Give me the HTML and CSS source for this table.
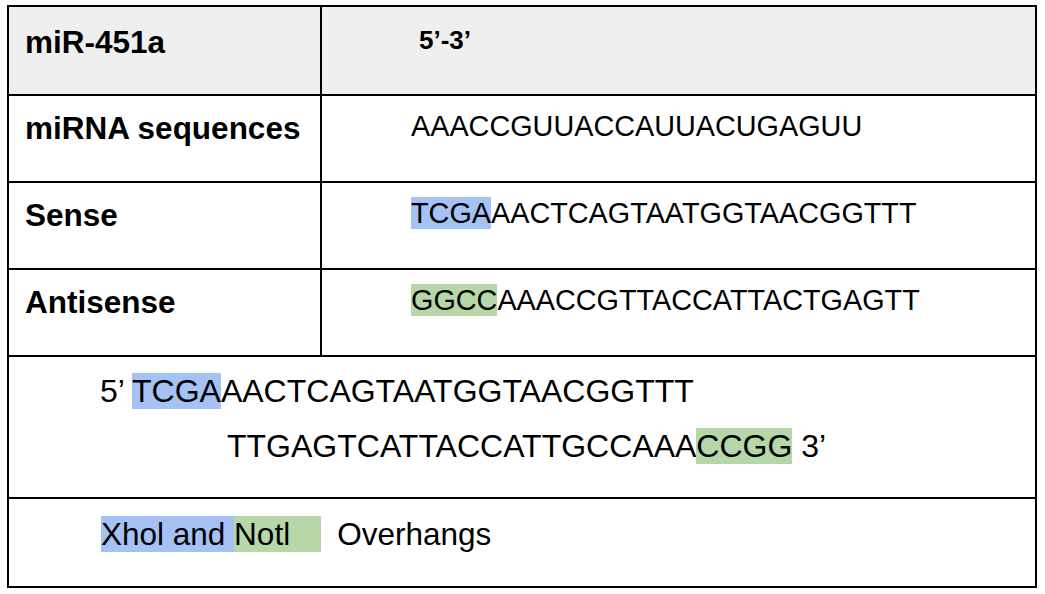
FILE: index.html
```html
<!DOCTYPE html>
<html>
<head>
<meta charset="utf-8">
<link rel="stylesheet" href="styles.css">
</head>
<body>
<table class="grid">
  <tr class="row head">
    <td class="label head-label">miR-451a</td>
    <td class="seq head-seq">5’-3’</td>
  </tr>
  <tr class="row">
    <td class="label">miRNA sequences</td>
    <td class="seq">AAACCGUUACCAUUACUGAGUU</td>
  </tr>
  <tr class="row">
    <td class="label">Sense</td>
    <td class="seq"><span class="hl-blue">TCGA</span>AACTCAGTAATGGTAACGGTTT</td>
  </tr>
  <tr class="row">
    <td class="label">Antisense</td>
    <td class="seq"><span class="hl-green">GGCC</span>AAACCGTTACCATTACTGAGTT</td>
  </tr>
  <tr class="row duplex-row">
    <td class="duplex" colspan="2">
      <div class="strand">5’ <span class="hl-blue">TCGA</span>AACTCAGTAATGGTAACGGTTT</div>
      <div class="strand strand-bottom">TTGAGTCATTACCATTGCCAAA<span class="hl-green">CCGG</span> 3’</div>
    </td>
  </tr>
  <tr class="row legend-row">
    <td class="legend" colspan="2"><span class="hl-blue">Xhol and </span><span class="hl-green legend-green">Notl</span><span class="legend-text">Overhangs</span></td>
  </tr>
</table>
</body>
</html>
```

FILE: styles.css
```css
html, body {
  margin: 0;
  background: #ffffff;
}

body {
  padding: 5px 0 0 7px;
  font-family: "Liberation Sans", Arial, sans-serif;
  color: #000;
}

.grid {
  border-collapse: collapse;
  width: 1030px;
  table-layout: fixed;
}

.grid td {
  border: 2px solid #000;
  vertical-align: top;
  padding: 0;
}

.row td {
  height: 87px;
  box-sizing: border-box;
}

.head td {
  background: #efefef;
  height: 89px;
}

.label {
  width: 313px;
  box-sizing: border-box;
  padding: 14px 0 0 16px !important;
  font-weight: bold;
  font-size: 31.5px;
  line-height: 1.15;
  white-space: nowrap;
}

.head-label {
  padding-top: 17px !important;
}

.seq {
  padding: 14px 0 0 89px !important;
  font-size: 28.8px;
  line-height: 1.15;
  white-space: nowrap;
}

.head-seq {
  padding: 19px 0 0 97px !important;
  font-weight: bold;
  font-size: 26px;
}

.hl-blue {
  background: #a4c2f4;
}

.hl-green {
  background: #b6d7a8;
}

.duplex-row td {
  height: 142px;
}

.duplex {
  padding: 7px 0 0 91px !important;
  font-size: 32px;
  line-height: 55px;
  white-space: nowrap;
}

.strand-bottom {
  padding-left: 127px;
}

.legend-row td {
  height: 89px;
}

.legend {
  padding: 17px 0 0 92px !important;
  font-size: 31.5px;
  line-height: 1.15;
  white-space: nowrap;
}

.legend-green {
  padding-right: 31px;
}

.legend-text {
  margin-left: 16px;
}
```
